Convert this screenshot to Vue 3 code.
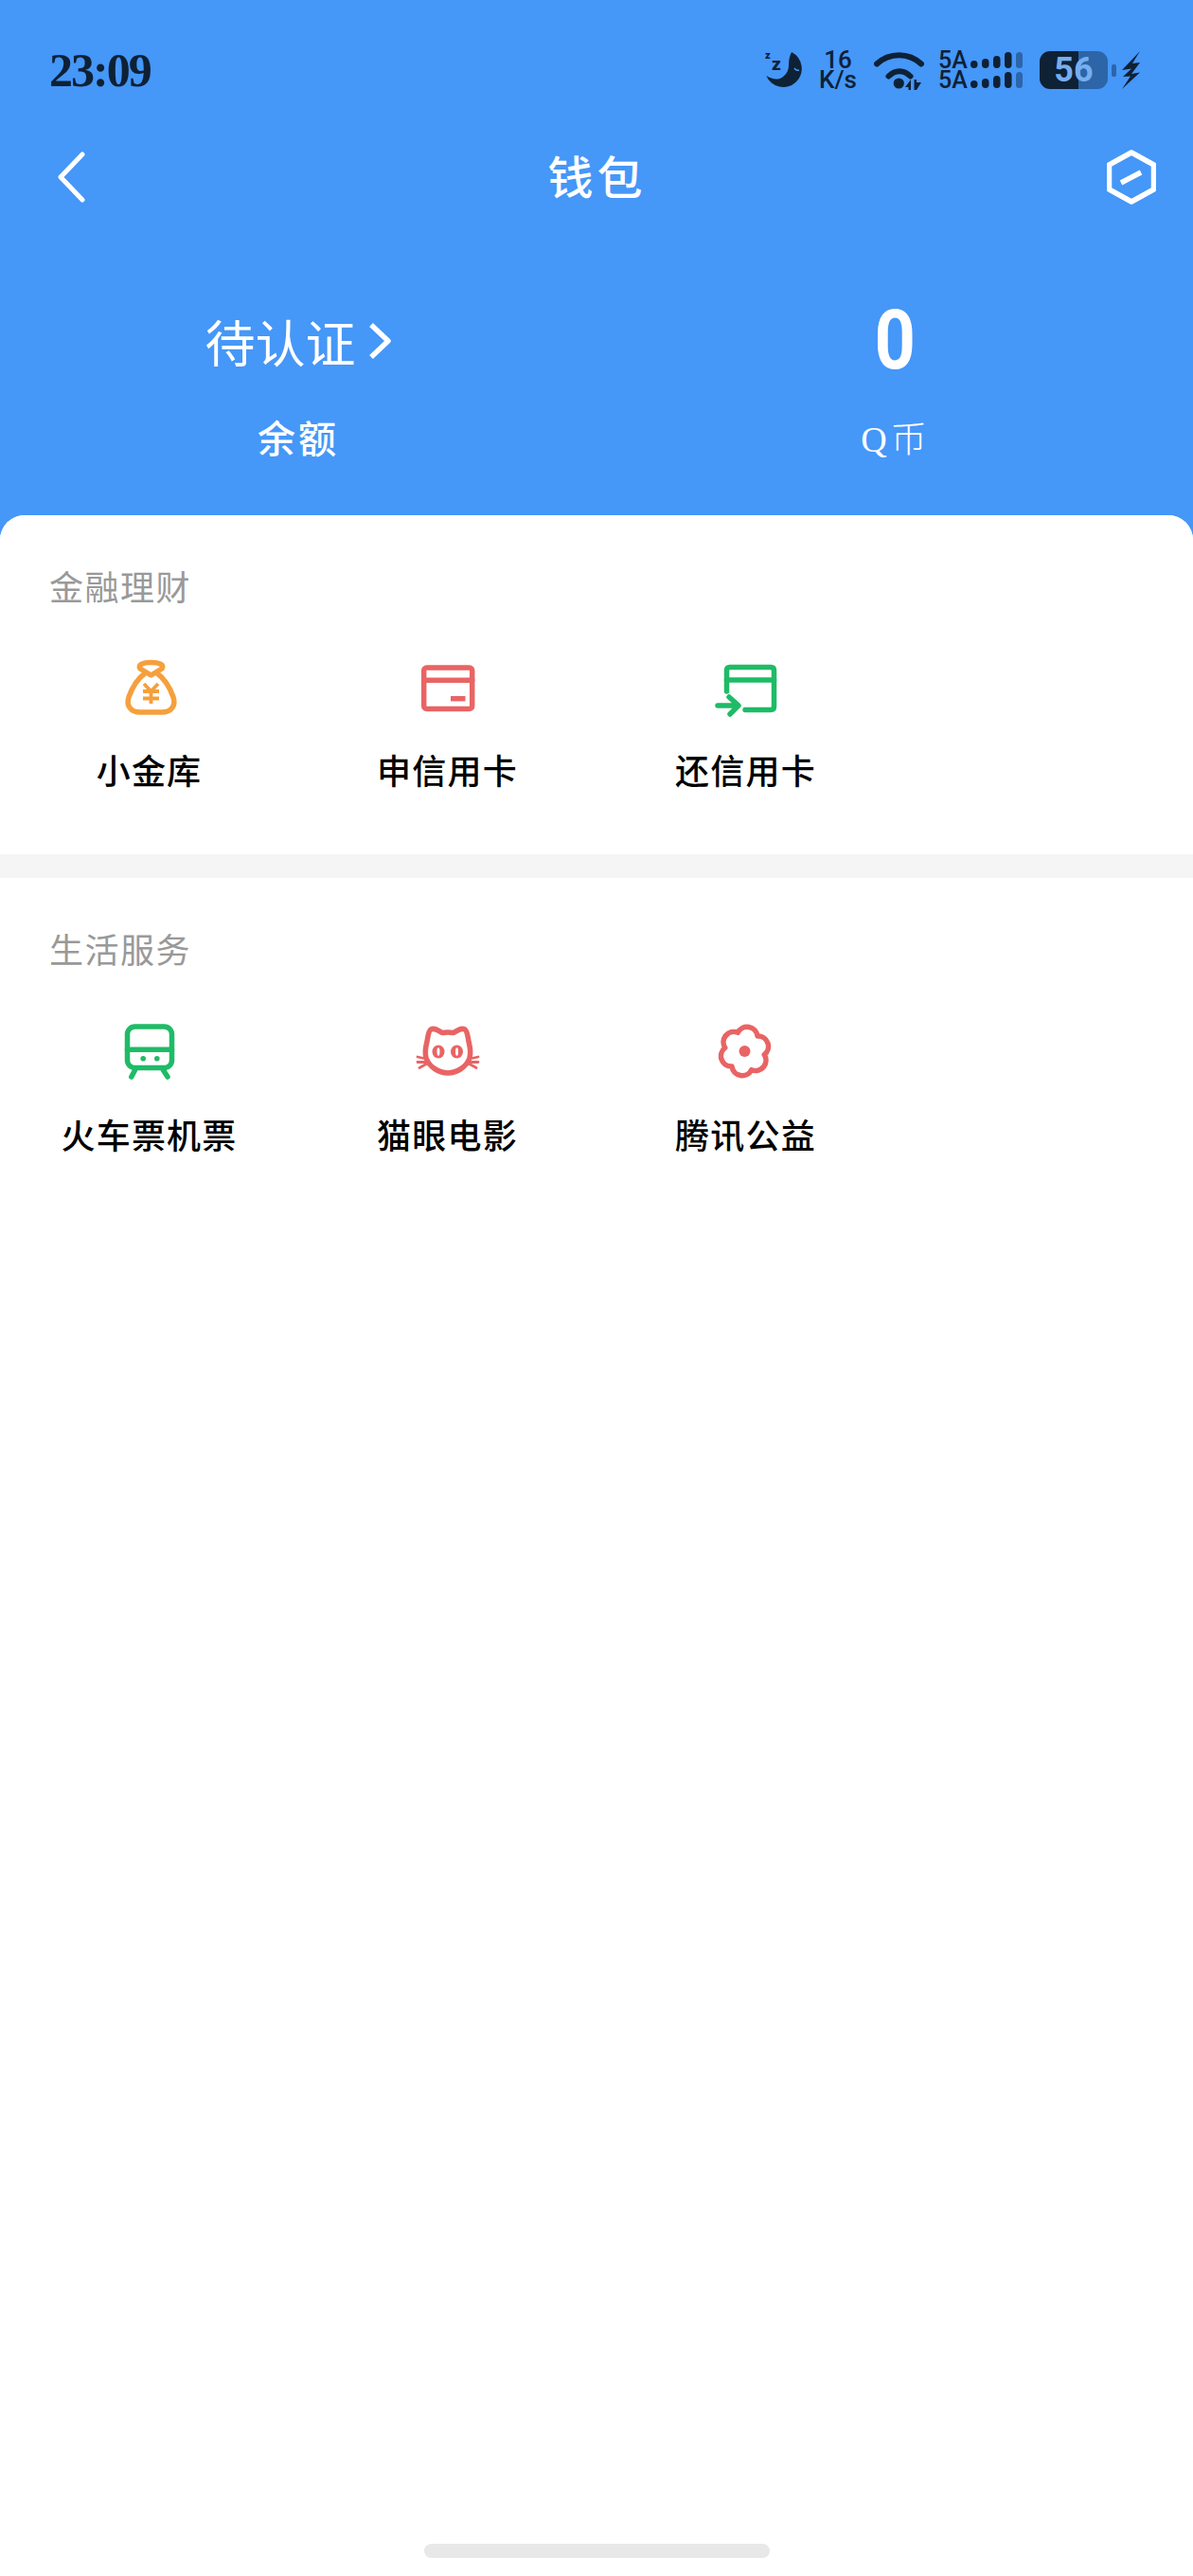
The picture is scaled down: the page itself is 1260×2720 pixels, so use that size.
<script setup>
const finance = [
  { key: 'bag', label: '小金库' },
  { key: 'card', label: '申信用卡' },
  { key: 'repay', label: '还信用卡' },
]
const life = [
  { key: 'train', label: '火车票机票' },
  { key: 'cat', label: '猫眼电影' },
  { key: 'flower', label: '腾讯公益' },
]
const sections = [
  { title: '金融理财', items: finance, cls: 'first' },
  { title: '生活服务', items: life, cls: 'second' },
]
</script>

<template>
  <div class="page">
    <header class="head">
      <div class="status">
        <span class="time">23:09</span>
        <div class="indicators">
          <svg class="moon" width="42" height="42" viewBox="0 0 42 42">
            <path class="dark" d="M28 2A19.5 19.5 0 1 1 1.3 27C8 31 14 32 19 28C23 25 25 21 25 16C25 10 26 6 28 2Z" />
            <path class="eye" d="M31 19Q33 22 36 21" />
            <text class="zs" x="0" y="9">z</text>
            <text class="zb" x="7" y="21">z</text>
          </svg>
          <div class="speed"><span>16</span><span>K/s</span></div>
          <svg class="wifi" width="54" height="44" viewBox="0 0 54 44">
            <path class="wave" d="M3 15.5C16 3 37 3 50 15.5" />
            <path class="wave" d="M15.5 28.5C22.5 21.5 31.5 21.5 38.5 28.5" />
            <circle class="dark" cx="26.3" cy="36" r="5.6" />
            <path class="dark" d="M39 32V43H36.5V40H33Z M42.5 32H45V35L50 35L45 43H42.5Z" />
          </svg>
          <div class="signal">
            <div v-for="n in 2" :key="n" class="sig-row">
              <span class="sig-name">5A</span>
              <svg width="56" height="18" viewBox="0 0 56 18">
                <rect class="dark" x="0" y="9" width="7.5" height="8" rx="3.7" />
                <rect class="dark" x="12" y="7" width="7.5" height="10" rx="3.7" />
                <rect class="dark" x="24" y="4" width="7.5" height="13" rx="3.7" />
                <rect class="dark" x="36" y="0" width="7.5" height="17" rx="3.7" />
                <rect class="faint" x="48" y="0" width="7" height="17" rx="3.5" />
              </svg>
            </div>
          </div>
          <div class="battery"><span>56</span></div>
          <i class="nub"></i>
          <svg class="bolt" width="20" height="40" viewBox="0 0 20 40">
            <path class="dark" d="M19 0L0 20L10 18.5L1 27L9 26.5L0 40L19 22.5L10 24L19 12L11 13Z" />
          </svg>
        </div>
      </div>

      <nav class="nav">
        <svg class="back" width="30" height="54" viewBox="0 0 30 54">
          <path d="M27 3L4 27L27 51" />
        </svg>
        <h1 class="title">钱包</h1>
        <svg class="hex" width="52" height="58" viewBox="0 0 52 58">
          <path d="M26 3L49.5 16V42L26 55L2.5 42V16Z" />
          <path d="M15 35L36 24" />
        </svg>
      </nav>

      <div class="stats">
        <div class="stat">
          <div class="value pending">
            <span>待认证</span>
            <svg width="26" height="40" viewBox="0 0 26 40">
              <path d="M4 3L22 20L4 37" />
            </svg>
          </div>
          <div class="stat-label strong">余额</div>
        </div>
        <div class="stat">
          <div class="value number"><span>0</span></div>
          <div class="stat-label"><span class="q">Q</span>币</div>
        </div>
      </div>
    </header>

    <main class="card">
      <section v-for="s in sections" :key="s.title" class="section" :class="s.cls">
        <h2 class="sec-title">{{ s.title }}</h2>
        <div class="grid">
          <div v-for="it in s.items" :key="it.key" class="item">
            <svg class="icon" width="80" height="80" viewBox="0 0 80 80">
              <g v-if="it.key === 'bag'" class="orange">
                <path d="M35 25C28 30 22 39 18 50C15 59 20 66 30 66H53C63 66 68 59 65 50C61 39 55 30 48 25" />
                <path d="M41.5 27L30 20C27 16 33 13.5 41.5 13.5C50 13.5 56 16 53 20Z" />
                <path class="thin" d="M34 36L41.5 44L49 36M33 44H50M33 51.5H50M41.5 44V57" />
              </g>
              <g v-else-if="it.key === 'card'" class="red">
                <rect x="14.7" y="19" width="51" height="43.5" rx="3" />
                <path d="M14.7 32.3H65.7" />
                <path class="butt" d="M43 51.7H58.5" />
              </g>
              <g v-else-if="it.key === 'repay'" class="green">
                <path d="M19.5 44V22Q19.5 18.5 23 18.5H66Q69.5 18.5 69.5 22V60Q69.5 63.5 66 63.5H39" />
                <path d="M19.5 32H69.5" />
                <path d="M10 59H31M22 50L32 59L23 68" />
              </g>
              <g v-else-if="it.key === 'train'" class="green">
                <rect x="16.5" y="13" width="47" height="43.5" rx="8" />
                <path d="M16.5 37.3H63.5" />
                <circle class="solid" cx="33.2" cy="46.7" r="2.8" />
                <circle class="solid" cx="47.8" cy="46.7" r="2.8" />
                <path d="M24.5 59L20.8 66M54.5 59L59 66" />
              </g>
              <g v-else-if="it.key === 'cat'" class="red">
                <path d="M22 16C26 14 30 17 34 19.5Q40 18.5 46 19.5C50 17 54 14 58 16C61 18 61 25 62.5 31C64 37 64 42 63 46C60 55 50 62 40 62C30 62 20 55 17 46C16 42 16 37 17.5 31C19 25 19 18 22 16Z" />
                <ellipse class="solid" cx="30" cy="39.5" rx="6.5" ry="7" />
                <ellipse class="solid" cx="49.5" cy="39.5" rx="6.5" ry="7" />
                <ellipse class="hole" cx="30" cy="39.5" rx="1.5" ry="4.2" />
                <ellipse class="hole" cx="49.5" cy="39.5" rx="1.5" ry="4.2" />
                <path class="hair" d="M8 45L17 47M8 50.5H17M10 56.5L18 52M72 45L63 47M72 50.5H63M70 56.5L62 52" />
              </g>
              <g v-else class="red">
                <path d="M31.3 19.3A11 11 0 0 1 52 22.9A11 11 0 0 1 59.2 42.6A11 11 0 0 1 45.7 58.7A11 11 0 0 1 25 55.1A11 11 0 0 1 17.8 35.4A11 11 0 0 1 31.3 19.3Z" />
                <circle class="solid" cx="38.5" cy="39" r="6" />
              </g>
            </svg>
            <div class="label">{{ it.label }}</div>
          </div>
        </div>
      </section>
      <div class="home"></div>
    </main>
  </div>
</template>

<style scoped>
.page {
  width: 1260px;
  min-height: 2720px;
  display: flex;
  flex-direction: column;
  background: #fff;
  font-family: "Noto Sans CJK SC", "Noto Sans", sans-serif;
}
.head {
  background: #4597f8;
  padding-bottom: 83px;
  color: #fff;
}
.status {
  height: 148px;
  padding: 0 55px 0 52px;
  display: flex;
  align-items: center;
  justify-content: space-between;
}
.time {
  font-family: "Liberation Serif", serif;
  font-weight: 700;
  font-size: 50px;
  letter-spacing: -2px;
  color: #0e2135;
}
.indicators {
  display: flex;
  align-items: center;
  color: #0e2135;
}
.dark { fill: #0e2135; }
.faint { fill: #2c65a8; }
.eye { fill: none; stroke: #4597f8; stroke-width: 1.5; }
.zs, .zb { fill: #0e2135; font-family: Roboto, sans-serif; font-weight: 900; }
.zs { font-size: 11px; }
.zb { font-size: 19px; }
.speed {
  margin-left: 14px;
  width: 42px;
  display: flex;
  flex-direction: column;
  align-items: center;
  font-family: Roboto, sans-serif;
  font-weight: 500;
  font-size: 26px;
  line-height: 21px;
}
.wifi { margin-left: 17px; }
.wave { fill: none; stroke: #0e2135; stroke-width: 6; stroke-linecap: round; }
.signal {
  margin-left: 14px;
  display: flex;
  flex-direction: column;
  gap: 3px;
}
.sig-row {
  display: flex;
  align-items: center;
  height: 18px;
  gap: 4px;
}
.sig-name {
  width: 30px;
  font-family: Roboto, sans-serif;
  font-weight: 500;
  font-size: 25px;
  line-height: 18px;
}
.battery {
  margin-left: 17px;
  width: 72px;
  height: 40px;
  border-radius: 11px;
  background: linear-gradient(90deg, #0e2135 41px, #2c65a8 41px);
  display: flex;
  align-items: center;
  justify-content: center;
}
.battery span {
  font-family: Roboto, sans-serif;
  font-weight: 700;
  font-size: 36px;
  line-height: 40px;
  color: #76aef0;
}
.nub {
  display: block;
  margin-left: 4px;
  width: 5px;
  height: 13px;
  border-radius: 2px;
  background: #2c65a8;
}
.bolt { margin-left: 6px; }

.nav {
  height: 78px;
  padding: 0 39px 0 60px;
  display: grid;
  grid-template-columns: 1fr auto 1fr;
  align-items: center;
}
.back path {
  fill: none;
  stroke: #fff;
  stroke-width: 5;
  stroke-linecap: round;
  stroke-linejoin: round;
}
.title {
  margin: 0;
  box-sizing: border-box;
  padding-bottom: 6px;
  font-size: 48px;
  line-height: 60px;
  font-weight: 500;
  letter-spacing: 4px;
  transform: translateX(-10px);
}
.hex { justify-self: end; }
.hex path {
  fill: none;
  stroke: #fff;
  stroke-width: 5.5;
  stroke-linejoin: round;
}
.stats {
  display: grid;
  grid-template-columns: 1fr 1fr;
  padding-top: 92px;
}
.stat {
  display: flex;
  flex-direction: column;
  align-items: center;
}
.value {
  box-sizing: border-box;
  height: 90px;
  display: flex;
  align-items: center;
  justify-content: center;
}
.pending {
  padding-bottom: 6px;
  font-size: 53px;
  font-weight: 400;
  gap: 12px;
}
.pending path {
  fill: none;
  stroke: #fff;
  stroke-width: 5.5;
  stroke-linejoin: round;
}
.number {
  padding-bottom: 9px;
  font-family: Roboto, sans-serif;
  font-weight: 700;
  font-size: 88px;
}
.number span {
  display: block;
  transform: scaleX(0.86);
}
.stat-label {
  margin-top: 25px;
  height: 56px;
  line-height: 56px;
  font-size: 38px;
  font-weight: 300;
  letter-spacing: 2px;
}
.stat-label.strong {
  font-size: 40px;
  font-weight: 500;
  letter-spacing: 3px;
}
.q {
  font-family: "Liberation Serif", serif;
  margin-right: 2px;
}

.card {
  position: relative;
  flex: 1;
  margin-top: -28px;
  border-radius: 26px 26px 0 0;
  background: #fff;
  display: flex;
  flex-direction: column;
}
.section { background: #fff; padding-bottom: 62px; }
.section.first {
  padding-top: 50px;
  border-radius: 26px 26px 0 0;
  border-bottom: 25px solid #f5f5f5;
}
.section.second { padding-top: 50px; }
.second .grid { margin-top: 46px; }
.sec-title {
  margin: 0;
  padding-left: 52px;
  height: 48px;
  line-height: 48px;
  font-size: 36px;
  font-weight: 400;
  letter-spacing: 1.5px;
  color: #999;
}
.grid {
  margin-top: 44px;
  display: grid;
  grid-template-columns: repeat(4, 315px);
}
.item {
  display: flex;
  flex-direction: column;
  align-items: center;
}
.icon { display: block; }
.icon * {
  fill: none;
  stroke-width: 5.5;
  stroke-linecap: round;
  stroke-linejoin: round;
}
.orange * { stroke: #f5a03c; }
.red * { stroke: #e96464; }
.green * { stroke: #1fbb67; }
.icon .thin { stroke-width: 3.8; stroke-linecap: butt; stroke-linejoin: miter; }
.icon .butt { stroke-linecap: butt; }
.icon .hair { stroke-width: 2.8; }
.icon .solid { stroke: none; fill: #e96464; }
.green .solid.solid { fill: #1fbb67; }
.icon .hole { stroke: none; fill: #fff; }
.label {
  margin-top: 18px;
  height: 56px;
  line-height: 56px;
  font-size: 36px;
  font-weight: 500;
  letter-spacing: 1.2px;
  color: #000;
  white-space: nowrap;
}
.home {
  margin: auto auto 19px;
  width: 365px;
  height: 15px;
  border-radius: 8px;
  background: #e8e8e8;
}
</style>
